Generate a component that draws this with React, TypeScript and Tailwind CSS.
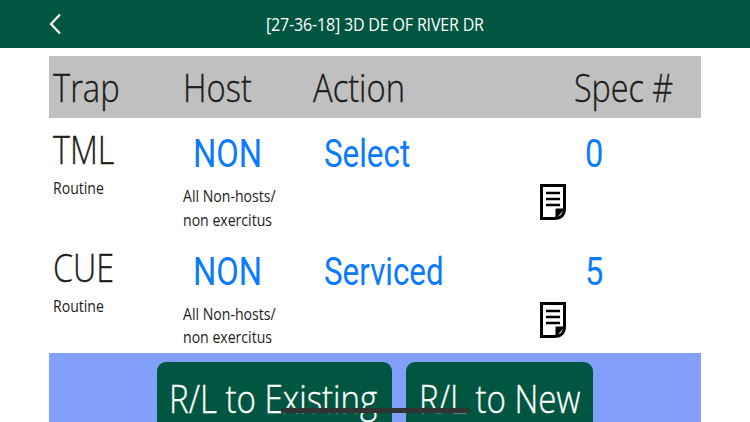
interface TrapRow {
  trap: string;
  action: string;
  spec: number;
}

const rows: TrapRow[] = [
  { trap: "TML", action: "Select", spec: 0 },
  { trap: "CUE", action: "Serviced", spec: 5 },
];

function NoteIcon() {
  return (
    <svg width="26" height="36" viewBox="0 0 26 36" fill="none" stroke="#000" strokeWidth="3">
      <path d="M1.5 1.5H24.5V24Q24.5 34.5 14 34.5H1.5Z" />
      <path d="M6 9H20M6 15H20M6 21H20" strokeWidth="2.4" />
      <path d="M24 25H16V34Z" fill="#000" strokeWidth="1" />
    </svg>
  );
}

function BackIcon() {
  return (
    <svg className="absolute left-[48px] top-[13px]" width="14" height="22" viewBox="0 0 14 22" fill="none" stroke="#fff" strokeWidth="2.2">
      <path d="M12 1.5L3 11L12 20.5" />
    </svg>
  );
}

export default function App() {
  return (
    <div className="relative h-[422px] w-[750px] overflow-hidden bg-white font-['Open_Sans',sans-serif] text-[#1c1c1c]">
      {/* Nav bar */}
      <div className="relative flex h-12 items-center bg-[#005640] pl-[266px] text-white">
        <BackIcon />
        <span className="inline-block origin-left scale-x-[0.89] whitespace-nowrap text-[18px] font-medium tracking-[-0.2px]">
          [27-36-18] 3D DE OF RIVER DR
        </span>
      </div>

      <div className="mx-[49px] mt-2">
        {/* Table head */}
        <div className="flex h-[62px] items-center bg-[#c0c0c0] text-[38px] font-light [-webkit-text-stroke:0.35px]">
          <div className="w-[134px] pl-[4px]">
            <span className="inline-block origin-left scale-x-[0.86]">Trap</span>
          </div>
          <div className="w-[130px]">
            <span className="inline-block origin-left scale-x-[0.86]">Host</span>
          </div>
          <div className="w-[261px]">
            <span className="inline-block origin-left scale-x-[0.86]">Action</span>
          </div>
          <div>
            <span className="inline-block origin-left scale-x-[0.85] whitespace-nowrap">Spec #</span>
          </div>
        </div>

        {rows.map((row) => (
          <div key={row.trap} className="flex h-[117.5px]">
            <div className="w-[134px] pl-[4px] pt-[6px]">
              <div className="text-[38px] font-light leading-[50px] [-webkit-text-stroke:0.35px]">
                <span className="inline-block origin-left scale-x-[0.85]">{row.trap}</span>
              </div>
              <div className="mt-[3px] text-[16px] leading-[22px]">
                <span className="inline-block origin-left scale-x-[0.88]">Routine</span>
              </div>
            </div>
            <div className="w-[130px] pt-[14px]">
              <div className="pl-[10px] font-['Roboto',sans-serif] text-[38px] leading-[44px] text-[#0a7aff]">
                <span className="inline-block origin-left scale-x-[0.86]">NON</span>
              </div>
              <div className="mt-[9px] text-[16px] leading-[23.5px]">
                <span className="inline-block origin-left scale-x-[0.88] whitespace-nowrap">All Non-hosts/</span>
                <br />
                <span className="inline-block origin-left scale-x-[0.88] whitespace-nowrap">non exercitus</span>
              </div>
            </div>
            <div className="w-[217px] pl-[11px] pt-[14px] font-['Roboto',sans-serif] text-[38px] leading-[44px] text-[#0a7aff]">
              <span className="inline-block origin-left scale-x-[0.825]">{row.action}</span>
            </div>
            <div className="flex w-[80px] flex-col items-start pl-[10px] pt-[14px]">
              <div className="pl-[45px] font-['Roboto',sans-serif] text-[38px] leading-[44px] text-[#0a7aff]">
                <span className="inline-block origin-left scale-x-[0.86]">{row.spec}</span>
              </div>
              <div className="mt-[8px]">
                <NoteIcon />
              </div>
            </div>
          </div>
        ))}

        {/* Bottom actions */}
        <div className="flex h-[80px] gap-[14px] bg-[#829ffb] pl-[108px] pt-[9px]">
          <div className="h-[80px] w-[235px] rounded-[9px] bg-[#005640] pl-[12px] pt-[12px] text-[38px] font-light leading-[48px] text-white [-webkit-text-stroke:0.35px]">
            <span className="inline-block origin-left scale-x-[0.87] whitespace-nowrap">R/L to Existing</span>
          </div>
          <div className="h-[80px] w-[187px] rounded-[9px] bg-[#005640] pl-[13px] pt-[12px] text-[38px] font-light leading-[48px] text-white [-webkit-text-stroke:0.35px]">
            <span className="inline-block origin-left scale-x-[0.87] whitespace-nowrap">R/L to New</span>
          </div>
        </div>
      </div>

      {/* Home indicator */}
      <div className="absolute left-[281px] top-[408px] h-[5px] w-[189px] rounded-full bg-[#333333]" />
    </div>
  );
}
